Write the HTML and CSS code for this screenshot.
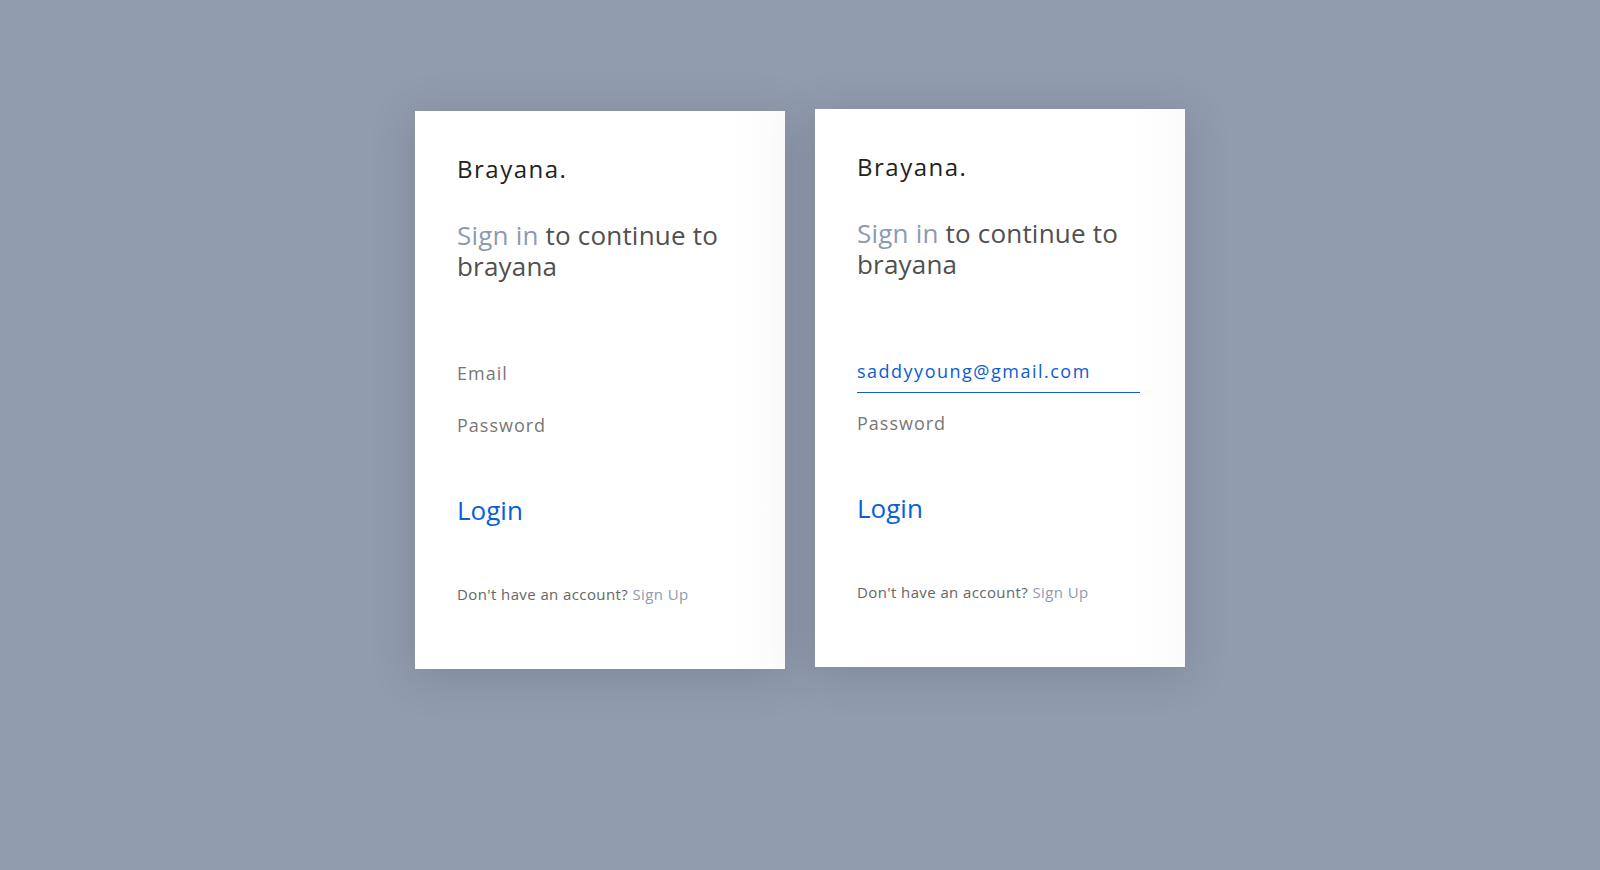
FILE: index.html
```html
<!DOCTYPE html>
<html lang="en">
<head>
<meta charset="utf-8">
<title>Brayana - Sign in</title>
<link rel="stylesheet" href="styles.css">
</head>
<body>
<main class="stage">
  <section class="card card-a">
    <div class="brand">Brayana.</div>
    <h1 class="title"><span class="accent">Sign in</span> to continue to brayana</h1>
    <form class="form">
      <input class="field" type="email" placeholder="Email">
      <input class="field" type="password" placeholder="Password">
    </form>
    <button class="login" type="button">Login</button>
    <p class="foot">Don't have an account? <a class="signup" href="#">Sign Up</a></p>
  </section>
  <section class="card card-b">
    <div class="brand">Brayana.</div>
    <h1 class="title"><span class="accent">Sign in</span> to continue to brayana</h1>
    <form class="form">
      <input class="field field-active" type="email" value="saddyyoung@gmail.com">
      <input class="field" type="password" placeholder="Password">
    </form>
    <button class="login" type="button">Login</button>
    <p class="foot">Don't have an account? <a class="signup" href="#">Sign Up</a></p>
  </section>
</main>
</body>
</html>
```
FILE: styles.css
```css
html, body {
  margin: 0;
  padding: 0;
  height: 100%;
}
body {
  background: #919cae;
  font-family: "Open Sans", "Noto Sans", sans-serif;
}
.stage {
  display: flex;
  justify-content: center;
  align-items: flex-start;
  gap: 30px;
  padding-top: 109px;
}
.card {
  width: 370px;
  height: 558px;
  box-sizing: border-box;
  padding: 42px 45px 0 42px;
  background: linear-gradient(90deg, #ffffff 85%, #fbfbfc 100%);
  box-shadow: 0 6px 40px rgba(50, 60, 80, 0.22);
}
.card-a {
  margin-top: 2px;
}
.brand {
  font-size: 24px;
  line-height: 32px;
  letter-spacing: 1.5px;
  color: #222222;
  font-weight: 500;
}
.title {
  margin: 35px 0 0;
  font-size: 26px;
  line-height: 31px;
  letter-spacing: 0.2px;
  font-weight: 400;
  color: #505050;
}
.accent {
  color: #8d9ab0;
}
.form {
  margin: 76px 0 0;
  display: flex;
  flex-direction: column;
  gap: 15px;
}
.field {
  display: block;
  width: 283px;
  height: 37px;
  box-sizing: border-box;
  margin: 0;
  padding: 0 0 7px 0;
  border: 0;
  border-bottom: 1px solid transparent;
  outline: none;
  background: transparent;
  font-family: inherit;
  font-size: 18px;
  letter-spacing: 1px;
  color: #777777;
}
.field::placeholder {
  color: #777777;
}
.field-active {
  color: #0d5ccf;
  letter-spacing: 1.5px;
  border-bottom-color: #0d5ccf;
}
.login {
  display: block;
  margin: 48px 0 0;
  padding: 0;
  border: 0;
  background: transparent;
  font-family: inherit;
  font-size: 26px;
  line-height: 31px;
  color: #0b5ed7;
  cursor: pointer;
}
.foot {
  margin: 57px 0 0;
  font-size: 15px;
  line-height: 22px;
  letter-spacing: 0.4px;
  color: #666666;
}
.signup {
  color: #8d9ab0;
  text-decoration: none;
}
```
